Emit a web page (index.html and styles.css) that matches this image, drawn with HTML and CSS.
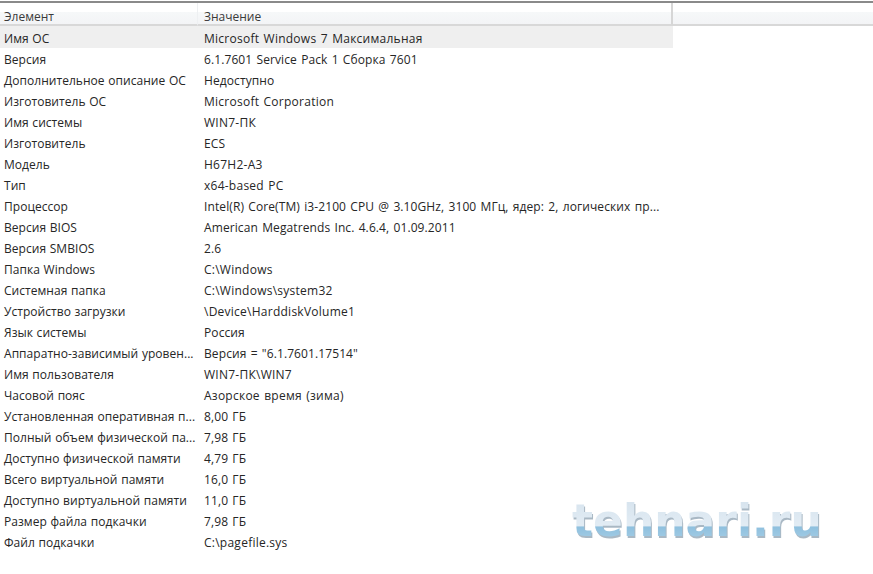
FILE: index.html
```html
<!DOCTYPE html>
<html lang="ru">
<head>
<meta charset="utf-8">
<title>Сведения о системе</title>
<link rel="stylesheet" href="styles.css">
</head>
<body>
<div class="top-line"></div>
<div class="header">
  <div class="head-cell head-a">Элемент</div>
  <div class="head-cell head-b">Значение</div>
  <div class="head-rest"></div>
</div>
<div class="rows">
  <div class="row selected"><div class="col-a">Имя ОС</div><div class="col-b latin">Microsoft Windows 7 Максимальная</div></div>
  <div class="row"><div class="col-a">Версия</div><div class="col-b">6.1.7601 Service Pack 1 Сборка 7601</div></div>
  <div class="row"><div class="col-a">Дополнительное описание ОС</div><div class="col-b">Недоступно</div></div>
  <div class="row"><div class="col-a">Изготовитель ОС</div><div class="col-b latin">Microsoft Corporation</div></div>
  <div class="row"><div class="col-a">Имя системы</div><div class="col-b latin">WIN7-ПК</div></div>
  <div class="row"><div class="col-a">Изготовитель</div><div class="col-b">ECS</div></div>
  <div class="row"><div class="col-a">Модель</div><div class="col-b latin">H67H2-A3</div></div>
  <div class="row"><div class="col-a">Тип</div><div class="col-b latin">x64-based PC</div></div>
  <div class="row"><div class="col-a">Процессор</div><div class="col-b">Intel(R) Core(TM) i3-2100 CPU @ 3.10GHz, 3100 МГц, ядер: 2, логических пр...</div></div>
  <div class="row"><div class="col-a">Версия BIOS</div><div class="col-b">American Megatrends Inc. 4.6.4, 01.09.2011</div></div>
  <div class="row"><div class="col-a">Версия SMBIOS</div><div class="col-b">2.6</div></div>
  <div class="row"><div class="col-a">Папка Windows</div><div class="col-b latin">C:\Windows</div></div>
  <div class="row"><div class="col-a">Системная папка</div><div class="col-b latin">C:\Windows\system32</div></div>
  <div class="row"><div class="col-a">Устройство загрузки</div><div class="col-b latin">\Device\HarddiskVolume1</div></div>
  <div class="row"><div class="col-a">Язык системы</div><div class="col-b">Россия</div></div>
  <div class="row"><div class="col-a">Аппаратно-зависимый уровен...</div><div class="col-b">Версия = "6.1.7601.17514"</div></div>
  <div class="row"><div class="col-a">Имя пользователя</div><div class="col-b latin">WIN7-ПК\WIN7</div></div>
  <div class="row"><div class="col-a">Часовой пояс</div><div class="col-b latin">Азорское время (зима)</div></div>
  <div class="row"><div class="col-a">Установленная оперативная п...</div><div class="col-b">8,00 ГБ</div></div>
  <div class="row"><div class="col-a">Полный объем физической па...</div><div class="col-b">7,98 ГБ</div></div>
  <div class="row"><div class="col-a">Доступно физической памяти</div><div class="col-b">4,79 ГБ</div></div>
  <div class="row"><div class="col-a">Всего виртуальной памяти</div><div class="col-b">16,0 ГБ</div></div>
  <div class="row"><div class="col-a">Доступно виртуальной памяти</div><div class="col-b">11,0 ГБ</div></div>
  <div class="row"><div class="col-a">Размер файла подкачки</div><div class="col-b">7,98 ГБ</div></div>
  <div class="row"><div class="col-a">Файл подкачки</div><div class="col-b latin">C:\pagefile.sys</div></div>
</div>
<div class="watermark">tehnari.ru</div>
</body>
</html>
```

FILE: styles.css
```css
html, body {
  margin: 0;
  padding: 0;
  background: #fff;
  height: 100%;
  overflow: hidden;
}
body {
  position: relative;
  font-family: "Open Sans", "Noto Sans", sans-serif;
  font-size: 12px;
  color: #262626;
}
.top-line {
  height: 2px;
  margin-top: 1px;
  background: #8a8a8a;
}
.header {
  display: flex;
  height: 23px;
  align-items: stretch;
}
.head-cell, .head-rest {
  box-sizing: border-box;
  padding-top: 9px;
  padding-left: 4px;
  background: linear-gradient(#fff 9px, #f6f8f9 9px, #f3f4f6);
  border-bottom: 2px solid #d8d8d8;
  line-height: 9px;
  color: #3a3a3a;
}
.head-a { width: 198px; border-right: 1px solid #eef0f2; }
.head-b { width: 475px; padding-left: 6px; border-right: 2px solid #d6d6d6; }
.head-rest { flex: 1; }
.col-a {
  width: 196px;
  padding-left: 4px;
  flex: none;
  white-space: nowrap;
  letter-spacing: 0.04px;
  word-spacing: 0.5px;
}
.col-b {
  width: 469px;
  padding-left: 4px;
  flex: none;
  white-space: nowrap;
  letter-spacing: 0.1px;
  word-spacing: 1px;
}
.col-b.latin {
  letter-spacing: 0.25px;
}
.rows {
  display: flex;
  flex-direction: column;
}
.row {
  display: flex;
  height: 21px;
  line-height: 24px;
  width: 673px;
}
.row.selected {
  background: #efefef;
  height: 22px;
  line-height: 26px;
}
.watermark {
  position: absolute;
  left: 572px;
  top: 491px;
  font-family: "DejaVu Sans", sans-serif;
  font-weight: 700;
  font-size: 44px;
  line-height: 60px;
  background: linear-gradient(#d3e1ec 0%, #e2ecf4 58%, #8fc0de 60%, #a6cee6 85%);
  -webkit-background-clip: text;
  background-clip: text;
  color: transparent;
  filter: drop-shadow(1px 2px 0 #a9b8c4);
}
```
